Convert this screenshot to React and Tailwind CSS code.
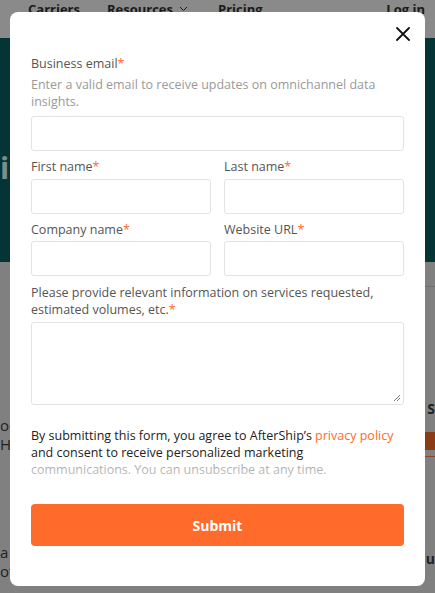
function Label({ children, className = '' }) {
  return (
    <p className={`text-[12.5px] leading-[17px] text-[#555] ${className}`}>
      {children}<span className="text-[#ff6b2b]">*</span>
    </p>
  )
}

function Input() {
  return <div className="h-[35px] rounded-[3px] border border-[#e3e3e3] bg-white" />
}

export default function App() {
  return (
    <div className="relative h-[593px] w-[435px] overflow-hidden bg-[#808080] font-['Open_Sans',sans-serif]">
      {/* page behind the overlay */}
      <div className="flex h-[38px] items-start bg-[#8a8a8a] pl-[28px] pr-[10px] pt-px text-[13px] font-bold leading-[16px] text-[#1a1a1a]">
        <span>Carriers</span>
        <span className="ml-[27px] flex items-center gap-[6px]">
          Resources
          <svg width="9" height="6" viewBox="0 0 9 6"><path d="M1 1l3.5 3.5L8 1" fill="none" stroke="#1a1a1a" strokeWidth="1" /></svg>
        </span>
        <span className="ml-[30px]">Pricing</span>
        <span className="ml-auto">Log in</span>
      </div>
      <div className="h-[224px] bg-[#053436] pt-[112px] text-[30px] font-bold leading-[36px] text-[#7f8c8c]">ic</div>
      <div className="absolute left-0 top-[416px] text-[15px] leading-[19px] text-[#222]">
        <p>oc</p>
        <p>H</p>
      </div>
      <div className="absolute left-0 top-[543px] text-[15px] leading-[19px] text-[#222]">
        <p>a</p>
        <p>off</p>
      </div>
      <div className="absolute right-0 top-[398px] text-[14px] font-bold text-[#222]">S</div>
      <div className="absolute right-0 top-[432px] h-[18px] w-[10px] bg-[#8a3c17]" />
      <div className="absolute right-0 top-[286px] h-px w-[10px] bg-[#6e6e6e]" />
      <div className="absolute right-0 top-[456px] h-px w-[10px] bg-[#8a4a2a]" />
      <div className="absolute right-0 top-[548px] text-[14px] font-bold text-[#222]">ju</div>

      {/* modal */}
      <div className="absolute left-[10px] top-[12px] h-[574px] w-[415px] rounded-[8px] bg-white px-[21px]">
        <div className="flex justify-end pt-[15px] pr-[-6px]">
          <svg className="mr-[-6px]" width="14" height="14" viewBox="0 0 14 14">
            <path d="M1 1l12 12M13 1L1 13" stroke="#111" strokeWidth="1.8" strokeLinecap="round" />
          </svg>
        </div>
        <Label className="mt-[14px]">Business email</Label>
        <p className="mt-[4px] text-[12.5px] leading-[17px] text-[#9a9a9a]">
          Enter a valid email to receive updates on omnichannel data insights.
        </p>
        <div className="mt-[6px]"><Input /></div>

        <div className="mt-[7px] grid grid-cols-2 gap-x-[13px] gap-y-[7px]">
          <div>
            <Label>First name</Label>
            <div className="mt-[4px]"><Input /></div>
          </div>
          <div>
            <Label>Last name</Label>
            <div className="mt-[4px]"><Input /></div>
          </div>
          <div>
            <Label>Company name</Label>
            <div className="mt-[3px]"><Input /></div>
          </div>
          <div>
            <Label>Website URL</Label>
            <div className="mt-[3px]"><Input /></div>
          </div>
        </div>

        <Label className="mt-[8px]">
          Please provide relevant information on services requested, estimated volumes, etc.
        </Label>
        <div className="relative mt-[4px] h-[83px] rounded-[3px] border border-[#e3e3e3]">
          <svg className="absolute bottom-[2px] right-[2px]" width="8" height="8" viewBox="0 0 8 8">
            <path d="M7 1L1 7M7 4L4 7" stroke="#777" strokeWidth="1" />
          </svg>
        </div>

        <div className="relative mt-[22px] text-[12.5px] leading-[17px] text-[#222]">
          <p>
            By submitting this form, you agree to AfterShip’s{' '}
            <span className="text-[#ff6b2b]">privacy policy</span> and consent to receive personalized marketing
            communications. You can unsubscribe at any time.
          </p>
          <div className="pointer-events-none absolute bottom-0 left-0 right-0 h-[17px] bg-gradient-to-b from-white/55 to-white/75" />
        </div>

        <button className="mt-[26px] h-[42px] w-full rounded-[4px] bg-[#ff6b2b] text-[14px] font-bold text-white">
          Submit
        </button>
      </div>
    </div>
  )
}
